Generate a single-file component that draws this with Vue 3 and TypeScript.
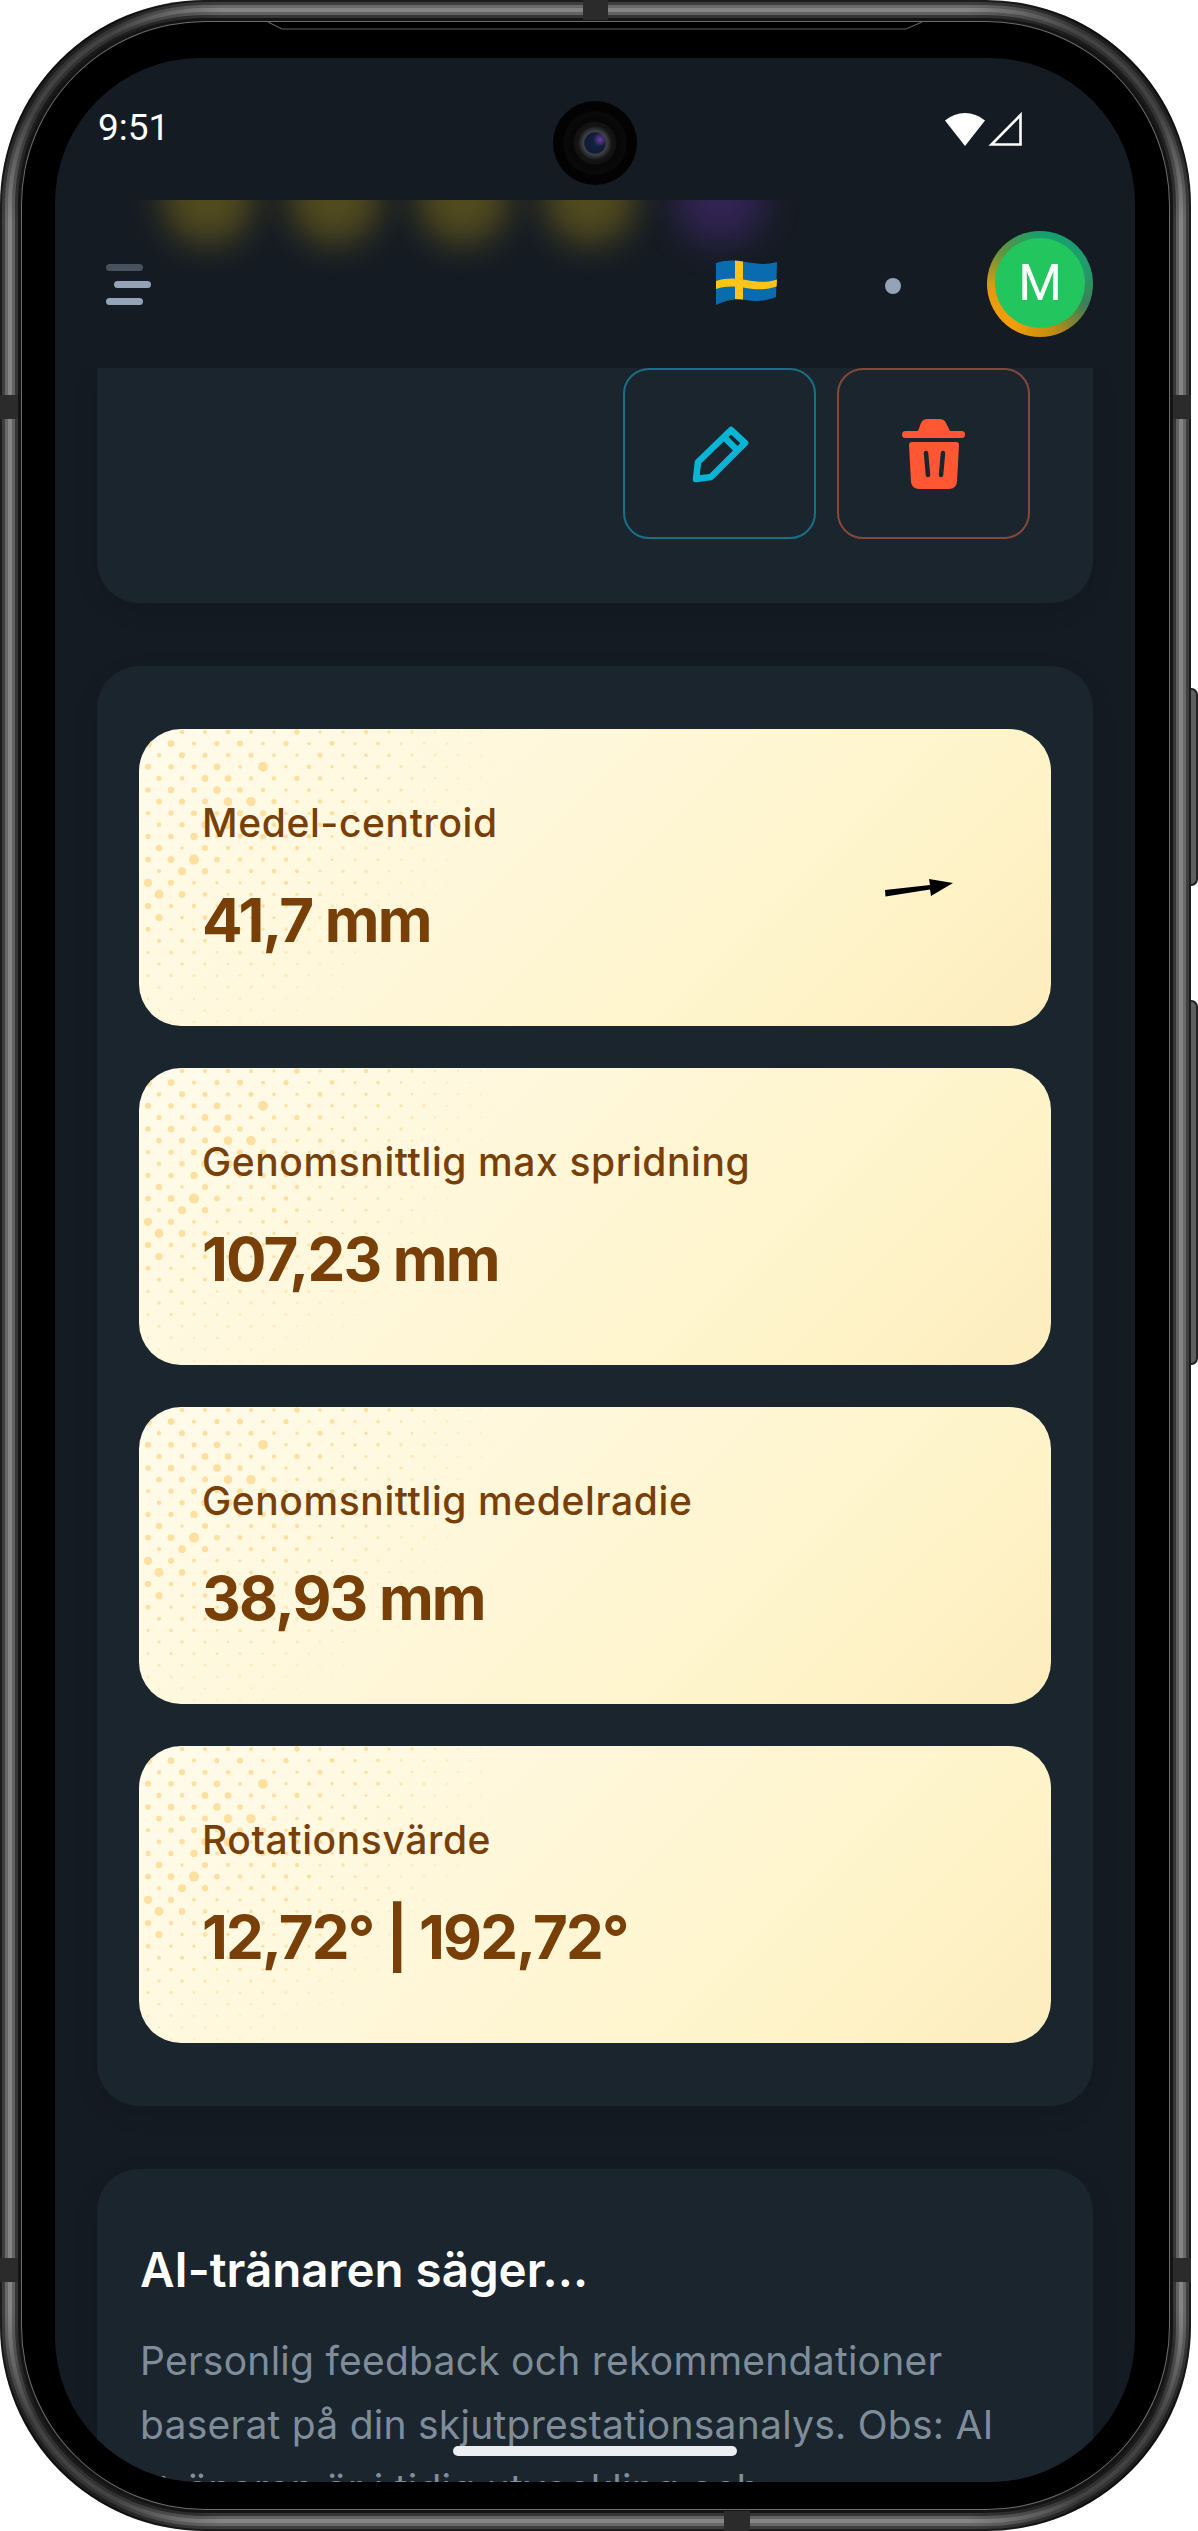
<template>
  <div class="device">
    <svg class="frame" width="1198" height="2531" viewBox="0 0 1198 2531">
      <defs>
        <radialGradient id="cornerShade">
          <stop offset="0.35" stop-color="#000" stop-opacity="0.5" />
          <stop offset="1" stop-color="#000" stop-opacity="0" />
        </radialGradient>
        <clipPath id="frameClip">
          <rect x="0" y="0" width="1191" height="2531" rx="205" />
        </clipPath>
      </defs>
      <rect class="side-btn" x="1186" y="689" width="11" height="196" rx="6" />
      <rect class="side-btn" x="1186" y="1001" width="11" height="363" rx="6" />
      <rect
        v-for="layer in metalLayers"
        :key="layer.inset"
        :x="layer.inset"
        :y="layer.inset"
        :width="1191 - layer.inset * 2"
        :height="2531 - layer.inset * 2"
        :rx="205 - layer.inset"
        :fill="layer.color"
      />
      <g clip-path="url(#frameClip)">
        <circle cx="60" cy="60" r="170" fill="url(#cornerShade)" />
        <circle cx="1131" cy="60" r="170" fill="url(#cornerShade)" />
        <circle cx="60" cy="2471" r="170" fill="url(#cornerShade)" />
        <circle cx="1131" cy="2471" r="170" fill="url(#cornerShade)" />
      </g>
      <rect
        v-for="layer in innerLayers"
        :key="layer.inset"
        :x="layer.inset"
        :y="layer.inset"
        :width="1191 - layer.inset * 2"
        :height="2531 - layer.inset * 2"
        :rx="205 - layer.inset"
        :fill="layer.color"
      />
      <rect class="band" x="583" y="0" width="25" height="20" />
      <rect class="band" x="724" y="2511" width="26" height="20" />
      <rect class="band" x="0" y="395" width="18" height="24" />
      <rect class="band" x="1173" y="395" width="18" height="24" />
      <rect class="band" x="0" y="2258" width="18" height="24" />
      <rect class="band" x="1173" y="2258" width="18" height="24" />
      <path class="chamfer" d="M268 22 L282 29 H906 L922 22" />
    </svg>

    <div class="screen">
      <div class="statusbar">
        <span class="time">9:51</span>
        <div class="status-icons">
          <svg width="40" height="34" viewBox="0 0 40 34">
            <path d="M0 8.5 Q9 1 20 1 Q31 1 40 8.5 L20 34 Z" fill="#fff" />
          </svg>
          <svg width="35" height="34" viewBox="0 0 35 34">
            <path d="M32.5 3 V32.5 H3.5 Z" fill="none" stroke="#fff" stroke-width="2.6" />
          </svg>
        </div>
      </div>

      <header class="appbar">
        <span
          v-for="glow in glows"
          :key="glow.x"
          class="glow"
          :class="glow.kind"
          :style="{ left: glow.x + 'px' }"
        ></span>
        <div class="menu">
          <i class="dim"></i>
          <i class="shift"></i>
          <i></i>
        </div>
        <svg class="flag" width="100" height="70" viewBox="0 0 100 70">
          <path
            d="M16 15 C26 12 36 12 46 14 C57 16 67 17 77 14 L76 49 C66 53 56 54 46 52 C36 50 26 52 16 57 Z"
            fill="#0a6cae"
          />
          <path
            d="M35 12.6 L43 13.4 L43 51.6 L35 51 Z"
            fill="#fcc419"
          />
          <path
            d="M16 33 C26 30 36 30 46 32 C57 34 67 35 77 31.5 L76.6 38.5 C66 42 57 42 46 40 C36 38 26 38 16 41 Z"
            fill="#fcc419"
          />
        </svg>
        <span class="lang-dot"></span>
        <div class="avatar">
          <div class="avatar-inner">M</div>
        </div>
      </header>

      <main class="content">
        <section class="card actions-card">
          <button class="icon-btn edit" aria-label="Redigera">
            <svg width="64" height="64" viewBox="0 0 64 64" fill="none" stroke="#06b6d4" stroke-width="6.5" stroke-linejoin="round">
              <path d="M8 57 L10 40 L43 8 L57 21 L23 55 Z" />
              <path d="M36 15 L50 29" />
            </svg>
          </button>
          <button class="icon-btn del" aria-label="Ta bort">
            <svg width="80" height="80" viewBox="0 0 80 80">
              <path d="M24 17 L27 9 Q29 5 33 5 H46 Q50 5 52 9 L56 17 Z" fill="#ff5733" />
              <rect x="8" y="17" width="63" height="7" rx="3.5" fill="#ff5733" />
              <path d="M15 31 Q15 28 18 28 H62 Q65 28 65 31 L63 68 Q62 75 55 75 H25 Q18 75 17 68 Z" fill="#ff5733" />
              <path d="M32 39 L34 61 M49 39 L47 61" stroke="#1b252d" stroke-width="4.5" stroke-linecap="round" />
            </svg>
          </button>
        </section>

        <section class="card stats-card">
          <div v-for="stat in stats" :key="stat.label" class="stat">
            <svg class="dots" width="420" height="297" viewBox="0 0 420 297">
              <circle v-for="d in dots" :key="d.key" :cx="d.x" :cy="d.y" :r="d.r" :opacity="d.o" />
            </svg>
            <div class="stat-label">{{ stat.label }}</div>
            <div class="stat-value">{{ stat.value }}</div>
            <svg v-if="stat.arrow" class="arrow" width="70" height="22" viewBox="0 0 70 22">
              <path d="M1 12 L46 7 L45 1 L69 5 L47 18 L46 11.5 L1.5 18.5 Z" fill="#000" />
            </svg>
          </div>
        </section>

        <section class="card ai-card">
          <h2>AI-tränaren säger...</h2>
          <p>
            Personlig feedback och rekommendationer<br />
            baserat på din skjutprestationsanalys. Obs: AI<br />
            -tränaren är i tidig utveckling och
          </p>
        </section>
      </main>

      <div class="camera"></div>
      <div class="home-bar"></div>
    </div>
  </div>
</template>

<script setup lang="ts">
interface Stat {
  label: string
  value: string
  arrow?: boolean
}

const stats: Stat[] = [
  { label: 'Medel-centroid', value: '41,7 mm', arrow: true },
  { label: 'Genomsnittlig max spridning', value: '107,23 mm' },
  { label: 'Genomsnittlig medelradie', value: '38,93 mm' },
  { label: 'Rotationsvärde', value: '12,72° | 192,72°' }
]

const metalLayers = [
  { inset: 0, color: '#1c1c1c' },
  { inset: 2, color: '#3e3e3e' },
  { inset: 5, color: '#686868' },
  { inset: 8, color: '#858585' },
  { inset: 12, color: '#626262' },
  { inset: 15, color: '#363636' }
]

const innerLayers = [
  { inset: 18, color: '#141414' },
  { inset: 21, color: '#6c6c6c' },
  { inset: 22, color: '#000000' }
]

const glows = [
  { x: 107, kind: 'yellow' },
  { x: 234, kind: 'yellow' },
  { x: 362, kind: 'yellow' },
  { x: 489, kind: 'yellow' },
  { x: 619, kind: 'purple' }
]

// halftone pattern in the top-left corner of the stat cards
const noise = (a: number, b: number) => {
  const v = Math.sin(a * 12.9898 + b * 78.233) * 43758.5453
  return v - Math.floor(v)
}

const dots: { key: string; x: number; y: number; r: number; o: number }[] = []
for (let row = 0; row < 26; row++) {
  for (let col = 0; col < 18; col++) {
    const x = (row % 2 === 0 ? 20 : 9) + col * 23
    const y = 3 + row * 11.6
    const d = Math.sqrt((x / 390) ** 2 + (y / 360) ** 2)
    if (d >= 1) continue
    const band = y > 30 ? Math.exp(-(((1.207 * x + y - 189) / 30) ** 2)) : 0
    const n = noise(row, col)
    const r = 0.8 + 2 * n * (1 - d) + 1.4 * (1 - d) + band * n * 2.6
    dots.push({ key: `${row}-${col}`, x, y, r, o: Math.min(1, (1 - d) * 2.4) })
  }
}
</script>

<style scoped>
.device {
  position: relative;
  width: 1198px;
  height: 2531px;
  background: #fff;
  overflow: hidden;
  font-family: Inter, "Liberation Sans", sans-serif;
}

.frame {
  position: absolute;
  left: 0;
  top: 0;
}

.side-btn {
  fill: #5f5f5f;
  stroke: #222;
  stroke-width: 2;
}

.band {
  fill: #2b2b2b;
}

.chamfer {
  fill: none;
  stroke: #5e5e5e;
  stroke-width: 1.2;
}

.screen {
  position: absolute;
  left: 55px;
  top: 58px;
  width: 1080px;
  height: 2424px;
  border-radius: 145px;
  overflow: hidden;
  background: #151b23;
  display: flex;
  flex-direction: column;
}

.statusbar {
  flex: none;
  height: 142px;
  padding: 0 112px 0 43px;
  display: flex;
  align-items: center;
  justify-content: space-between;
  box-sizing: border-box;
}

.time {
  font-family: Roboto, sans-serif;
  font-size: 37px;
  line-height: 40px;
  margin-top: -2px;
  color: #fff;
}

.status-icons {
  display: flex;
  gap: 3px;
}

.appbar {
  position: relative;
  flex: none;
  height: 168px;
  padding: 0 42px 0 51px;
  display: flex;
  align-items: center;
  overflow: hidden;
  box-sizing: border-box;
}

.glow {
  position: absolute;
  top: -48px;
  width: 92px;
  height: 92px;
  border-radius: 50%;
  filter: blur(17px);
}

.glow.yellow {
  background: rgba(226, 190, 20, 0.3);
}

.glow.purple {
  background: rgba(130, 60, 220, 0.26);
}

.menu {
  position: relative;
  width: 45px;
  display: flex;
  flex-direction: column;
  gap: 10px;
}

.menu i {
  display: block;
  width: 37px;
  height: 7px;
  border-radius: 4px;
  background: #94a3b8;
}

.menu i.dim {
  background: #47525e;
}

.menu i.shift {
  align-self: flex-end;
}

.flag {
  position: relative;
  margin-left: auto;
  margin-top: -2px;
}

.lang-dot {
  position: relative;
  width: 16px;
  height: 16px;
  margin: 4px 86px 0 85px;
  border-radius: 50%;
  background: #94a3b8;
}

.avatar {
  position: relative;
  width: 106px;
  height: 106px;
  border-radius: 50%;
  display: flex;
  align-items: center;
  justify-content: center;
  background: conic-gradient(#14a06f 0deg, #1f9d6c 70deg, #3d7f56 115deg, #c08c12 165deg, #f59e0b 215deg, #e49a0e 265deg, #5e9440 310deg, #14a06f 360deg);
}

.avatar-inner {
  width: 90px;
  height: 90px;
  margin-top: -3px;
  border-radius: 50%;
  background: #22c55e;
  color: #fff;
  font-family: Roboto, sans-serif;
  font-size: 50px;
  line-height: 90px;
  text-align: center;
}

.content {
  flex: 1;
  min-height: 0;
  padding: 0 42px;
  overflow: hidden;
  display: flex;
  flex-direction: column;
  gap: 63px;
}

.card {
  flex: none;
  border-radius: 42px;
  background: #1b252d;
  box-shadow: 0 8px 24px rgba(0, 0, 0, 0.1);
}

.actions-card {
  display: flex;
  justify-content: flex-end;
  gap: 21px;
  padding: 0 63px 64px;
  border-radius: 0 0 42px 42px;
}

.icon-btn {
  width: 193px;
  height: 171px;
  padding: 0;
  display: flex;
  align-items: center;
  justify-content: center;
  border-radius: 26px;
  background: transparent;
  border: 2px solid #1a6f88;
  box-sizing: border-box;
}

.icon-btn.del {
  border-color: #87463b;
}

.stats-card {
  display: flex;
  flex-direction: column;
  gap: 42px;
  padding: 63px 42px;
}

.stat {
  position: relative;
  height: 297px;
  box-sizing: border-box;
  padding: 69px 63px 0;
  border-radius: 42px;
  overflow: hidden;
  background: linear-gradient(135deg, #fffbeb 0%, #fef3c7 80%, #fdecbe 100%);
  color: #784008;
}

.dots {
  position: absolute;
  left: 0;
  top: 0;
  fill: #fde0a0;
}

.stat-label {
  position: relative;
  font-size: 39px;
  font-weight: 550;
  line-height: 50px;
  letter-spacing: 0.6px;
}

.stat-value {
  position: relative;
  margin-top: 34px;
  font-size: 60px;
  font-weight: 700;
  line-height: 76px;
  letter-spacing: -1.8px;
}

.arrow {
  position: absolute;
  left: 745px;
  top: 149px;
}

.ai-card {
  padding: 70px 43px 200px;
}

.ai-card h2 {
  margin: 0;
  font-size: 47.5px;
  font-weight: 600;
  line-height: 62px;
  color: #fff;
}

.ai-card p {
  margin: 28px 0 0;
  font-size: 39px;
  line-height: 64px;
  letter-spacing: 0.25px;
  color: #7f8d9b;
  white-space: nowrap;
}

.camera {
  position: absolute;
  left: 498px;
  top: 43px;
  width: 84px;
  height: 84px;
  border-radius: 50%;
  background:
    radial-gradient(circle 7px at 56% 46%, #6a3fa0, transparent),
    radial-gradient(circle at center, #13213f 0, #101b38 10px, #3f4145 11.5px, #2e2f33 14px, #141416 17px, #111 21px, #060606 22px, #0a0a0a 31px, #030303 32px, #020202 42px);
}

.home-bar {
  position: absolute;
  left: 398px;
  top: 2388px;
  width: 284px;
  height: 10px;
  border-radius: 5px;
  background: #eceef1;
}
</style>

<style>
html,
body {
  margin: 0;
  background: #fff;
}
</style>
